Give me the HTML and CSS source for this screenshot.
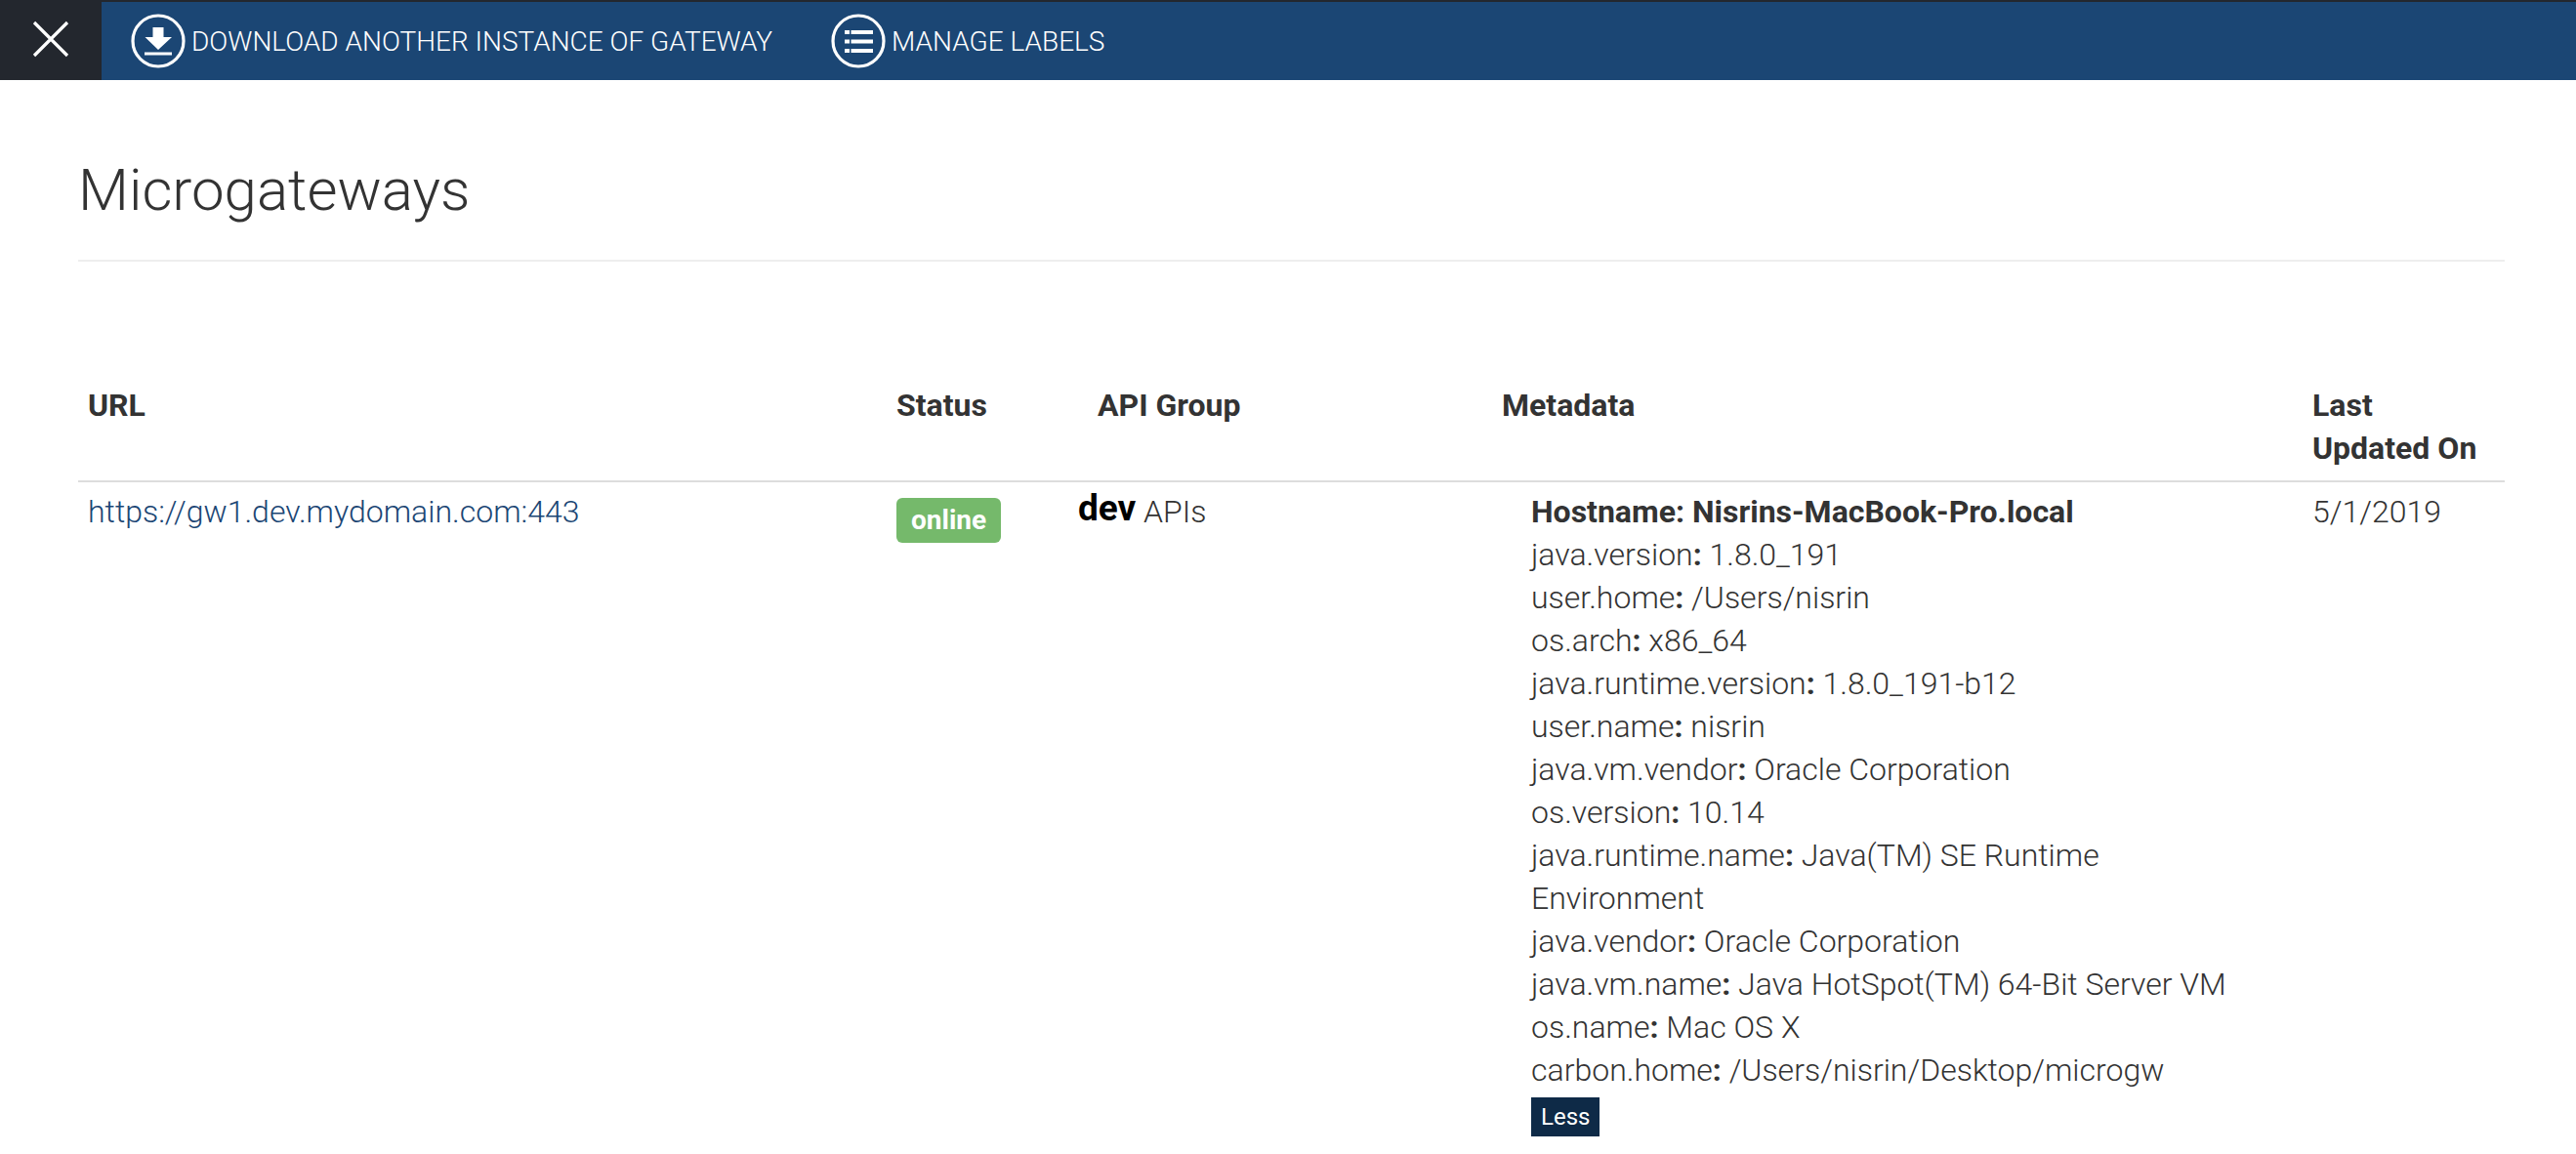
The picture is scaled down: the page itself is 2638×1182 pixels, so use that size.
FILE: index.html
```html
<!DOCTYPE html>
<html lang="en">
<head>
    <meta charset="UTF-8">
    <meta name="viewport" content="width=device-width, initial-scale=1.0">
    <title>Microgateways</title>
    <link rel="stylesheet" href="styles.css">
</head>
<body>
    <nav class="topbar">
        <button class="close-btn" aria-label="Close">
            <svg width="40" height="40" viewBox="0 0 40 40"><path d="M3 3 L37 37 M37 3 L3 37" stroke="#fff" stroke-width="3.2" fill="none"/></svg>
        </button>
        <a class="action" href="#">
            <svg class="action-icon" width="56" height="56" viewBox="0 0 56 56">
                <circle cx="28" cy="28" r="26" fill="none" stroke="#fff" stroke-width="3.2"/>
                <path d="M22.5 14 H33.5 V24 H42 L28 37 L14.5 24 H22.5 Z" fill="#fff"/>
                <rect x="14" y="39.5" width="28" height="3" fill="#fff"/>
            </svg>
            <span class="action-label">DOWNLOAD ANOTHER INSTANCE OF GATEWAY</span>
        </a>
        <a class="action" href="#">
            <svg class="action-icon" width="56" height="56" viewBox="0 0 56 56">
                <circle cx="28" cy="28" r="26" fill="none" stroke="#fff" stroke-width="3.2"/>
                <path d="M14 17 H19 V21 H14 Z M14 26.5 H19 V30.5 H14 Z M14 36 H19 V40 H14 Z M20.5 17 H43 V21 H20.5 Z M20.5 26.5 H43 V30.5 H20.5 Z M20.5 36 H43 V40 H20.5 Z" fill="#fff"/>
            </svg>
            <span class="action-label">MANAGE LABELS</span>
        </a>
    </nav>

    <main class="content">
        <h1>Microgateways</h1>

        <table class="gateways">
            <colgroup>
                <col class="col-url">
                <col class="col-status">
                <col class="col-group">
                <col class="col-meta">
                <col class="col-updated">
            </colgroup>
            <thead>
                <tr>
                    <th>URL</th>
                    <th>Status</th>
                    <th class="group-head">API Group</th>
                    <th>Metadata</th>
                    <th>Last<br>Updated On</th>
                </tr>
            </thead>
            <tbody>
                <tr>
                    <td><a href="#">https://gw1.dev.mydomain.com:443</a></td>
                    <td><span class="status">online</span></td>
                    <td><b class="group-name">dev</b> APIs</td>
                    <td>
                        <div class="meta">
                            <div class="hostname">Hostname: Nisrins-MacBook-Pro.local</div>
                            <div>java.version<b>:</b> 1.8.0_191</div>
                            <div>user.home<b>:</b> /Users/nisrin</div>
                            <div>os.arch<b>:</b> x86_64</div>
                            <div>java.runtime.version<b>:</b> 1.8.0_191-b12</div>
                            <div>user.name<b>:</b> nisrin</div>
                            <div>java.vm.vendor<b>:</b> Oracle Corporation</div>
                            <div>os.version<b>:</b> 10.14</div>
                            <div>java.runtime.name<b>:</b> Java(TM) SE Runtime Environment</div>
                            <div>java.vendor<b>:</b> Oracle Corporation</div>
                            <div>java.vm.name<b>:</b> Java HotSpot(TM) 64-Bit Server VM</div>
                            <div>os.name<b>:</b> Mac OS X</div>
                            <div>carbon.home<b>:</b> /Users/nisrin/Desktop/microgw</div>
                            <button class="less-btn">Less</button>
                        </div>
                    </td>
                    <td>5/1/2019</td>
                </tr>
            </tbody>
        </table>
    </main>
</body>
</html>
```

FILE: styles.css
```css
body {
    font-family: Roboto, "Liberation Sans", sans-serif;
    font-weight: 300;
    font-size: 32px;
    line-height: 44px;
    color: #333;
    background-color: #fff;
    margin: 0;
}

.topbar {
    display: flex;
    align-items: center;
    height: 80px;
    background-color: #1b4674;
    border-top: 2px solid #23272e;
}

.close-btn {
    display: flex;
    align-items: center;
    justify-content: center;
    width: 104px;
    height: 80px;
    padding: 0 0 4px;
    border: none;
    background-color: #23272e;
}

.action {
    display: flex;
    align-items: center;
    gap: 6px;
    margin-left: 30px;
    color: #fff;
    font-size: 28px;
    line-height: 44px;
    text-decoration: none;
}

.action + .action {
    margin-left: 60px;
}

.action-label {
    padding-top: 1px;
}

.content {
    padding: 0 73px 0 80px;
}

h1 {
    font-size: 60px;
    font-weight: 300;
    line-height: 66px;
    margin: 80px 0 0;
    padding-bottom: 38px;
    border-bottom: 2px solid #eee;
}

.gateways {
    width: 100%;
    table-layout: fixed;
    border-collapse: collapse;
    margin-top: 125px;
}

.col-url { width: 828px; }
.col-status { width: 186px; }
.col-group { width: 434px; }
.col-meta { width: 830px; }

th {
    text-align: left;
    vertical-align: top;
    font-weight: 700;
    padding: 0 10px 11px;
    border-bottom: 2px solid #ddd;
}

.group-head {
    padding-left: 30px;
}

td {
    vertical-align: top;
    padding: 8px 10px 10px;
}

td a {
    color: #1b4674;
    text-decoration: none;
}

.status {
    display: inline-block;
    background-color: #75b96b;
    color: #fff;
    font-size: 28px;
    font-weight: 700;
    line-height: 46px;
    padding: 0 15px;
    border-radius: 6px;
    margin-top: 8px;
}

.group-name {
    font-size: 37px;
    line-height: 1;
    font-weight: 700;
    color: #000;
    vertical-align: 2px;
}

.meta {
    margin: 0 50px 0 30px;
}

.hostname {
    font-weight: 700;
}

.meta b {
    font-weight: 700;
}

.less-btn {
    display: block;
    height: 40px;
    margin-top: 6px;
    padding: 0 10px;
    border: none;
    background-color: #0e2a47;
    color: #fff;
    font-family: Roboto, "Liberation Sans", sans-serif;
    font-size: 24px;
    font-weight: 400;
}
```
